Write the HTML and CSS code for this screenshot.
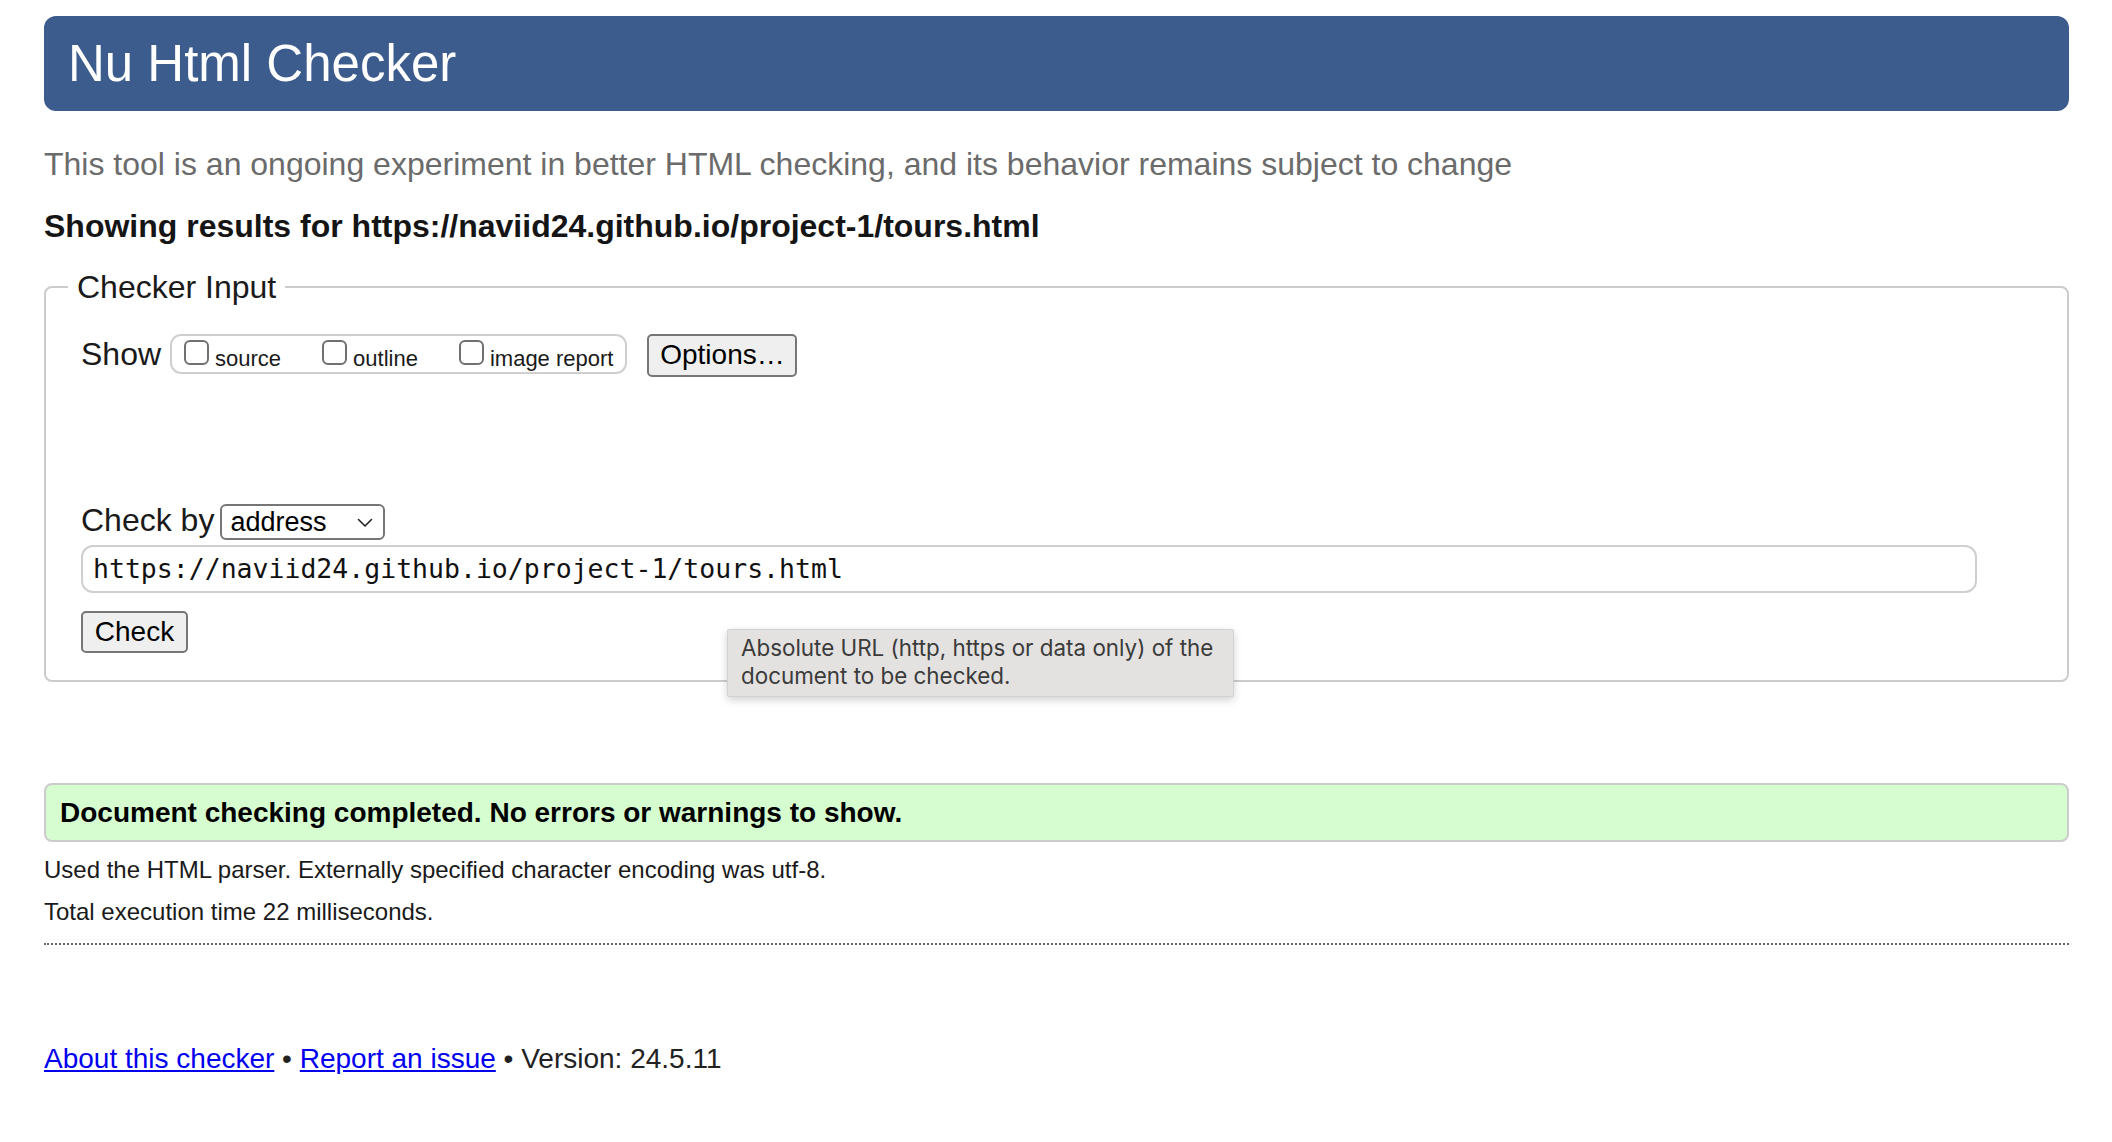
FILE: index.html
```
<!DOCTYPE html>
<html lang="en">
<head>
<meta charset="utf-8">
<title>Showing results for https://naviid24.github.io/project-1/tours.html - Nu Html Checker</title>
<link rel="stylesheet" href="styles.css">
</head>
<body>
<h1 class="title">Nu Html Checker</h1>
<p class="intro">This tool is an ongoing experiment in better HTML checking, and its behavior remains subject to change</p>
<p class="showing">Showing results for https://naviid24.github.io/project-1/tours.html</p>
<form class="checker">
  <fieldset class="fs">
    <legend class="legend">Checker Input</legend>
    <div class="fs-body">
      <div class="row show-row">
        <span class="label">Show</span>
        <span class="group">
          <label class="opt"><input type="checkbox" class="cb"><span>source</span></label>
          <label class="opt"><input type="checkbox" class="cb"><span>outline</span></label>
          <label class="opt"><input type="checkbox" class="cb"><span>image report</span></label>
        </span>
        <button type="button" class="btn btn-options">Options…</button>
      </div>
      <div class="spacer"></div>
      <div class="row by-row">
        <span class="label">Check by</span>
        <span class="select">
          <span class="select-text">address</span>
          <svg class="chev" width="16" height="10" viewBox="0 0 16 10"><path d="M1.5 1.5 L8 8 L14.5 1.5" fill="none" stroke="#222" stroke-width="1.6" stroke-linecap="round" stroke-linejoin="round"/></svg>
        </span>
      </div>
      <div class="url">https://naviid24.github.io/project-1/tours.html</div>
      <div class="row check-row">
        <button type="button" class="btn btn-check">Check</button>
      </div>
    </div>
    <div class="tooltip">Absolute URL (http, https or data only) of the document to be checked.</div>
  </fieldset>
</form>
<div class="success">Document checking completed. No errors or warnings to show.</div>
<p class="details">Used the HTML parser. Externally specified character encoding was utf-8.</p>
<p class="details">Total execution time 22 milliseconds.</p>
<hr class="dots">
<p class="footer"><a href="#">About this checker</a> • <a href="#">Report an issue</a> • Version: 24.5.11</p>
</body>
</html>
```
FILE: styles.css
```
html, body {
  background: #ffffff;
}
body {
  margin: 0;
  padding: 16px 43px 0 44px;
  font-family: "Liberation Sans", Arial, Helvetica, sans-serif;
  color: #111;
}
.title {
  margin: 0;
  height: 95px;
  line-height: 95px;
  background: #3d5c8e;
  color: #ffffff;
  border-radius: 12px;
  font-size: 51px;
  font-weight: normal;
  padding-left: 24px;
}
.intro {
  margin: 35px 0 0;
  font-size: 32px;
  line-height: 36px;
  color: #6b6b6b;
}
.showing {
  margin: 26px 0 0;
  font-size: 32px;
  line-height: 36px;
  font-weight: bold;
  color: #151515;
}
.checker {
  margin: 25px 0 0;
}
.fs {
  position: relative;
  margin: 0;
  border: 2px solid #cccccc;
  border-radius: 8px;
  padding: 0 0 0 22px;
  min-width: 0;
}
.legend {
  font-size: 32px;
  line-height: 36px;
  padding: 0 9px;
  color: #1a1a1a;
}
.fs-body {
  padding: 27px 0 27px 13px;
}
.row {
  display: flex;
  align-items: center;
}
.label {
  font-size: 32px;
  line-height: 40px;
  color: #1a1a1a;
}
.show-row {
  height: 44px;
}
.group {
  display: inline-flex;
  align-items: flex-start;
  margin-left: 9px;
  height: 40px;
  box-sizing: border-box;
  border: 2px solid #cfcfcf;
  border-radius: 11px;
  padding: 2px 12px 0 12px;
  gap: 41px;
}
.opt {
  display: inline-flex;
  align-items: flex-start;
  font-size: 22px;
  color: #1a1a1a;
}
.opt span {
  margin-top: 8px;
  margin-left: 6px;
}
.cb {
  appearance: none;
  -webkit-appearance: none;
  margin: 2px 0 0;
  width: 25px;
  height: 25px;
  box-sizing: border-box;
  border: 2px solid #707070;
  border-radius: 6px;
  background: #fff;
}
.btn {
  font-family: "Liberation Sans", Arial, Helvetica, sans-serif;
  background: #efefef;
  border: 2px solid #767676;
  border-radius: 5px;
  color: #000;
  padding: 0;
  box-sizing: border-box;
}
.btn-options {
  margin-left: 20px;
  margin-top: 2px;
  width: 150px;
  height: 43px;
  font-size: 28px;
}
.spacer {
  height: 124px;
}
.by-row {
  height: 40px;
}
.select {
  display: inline-flex;
  align-items: center;
  justify-content: space-between;
  margin-left: 6px;
  margin-top: 3px;
  width: 165px;
  height: 36px;
  box-sizing: border-box;
  border: 2px solid #767676;
  border-radius: 6px;
  padding: 0 10px 0 8px;
  font-size: 27px;
  color: #000;
}
.select-text {
  line-height: 32px;
}
.chev {
  display: block;
  margin-top: 2px;
}
.url {
  margin-top: 5px;
  margin-right: 90px;
  height: 48px;
  box-sizing: border-box;
  border: 2px solid #cfcfcf;
  border-radius: 12px;
  padding: 0 10px;
  font-family: "DejaVu Sans Mono", Menlo, monospace;
  font-size: 26.5px;
  line-height: 44px;
  color: #111;
}
.check-row {
  margin-top: 18px;
}
.btn-check {
  width: 107px;
  height: 42px;
  font-size: 28px;
}
.tooltip {
  position: absolute;
  left: 681px;
  top: 324px;
  width: 507px;
  height: 68px;
  box-sizing: border-box;
  padding: 4px 12px 0 13px;
  background: #e3e2e0;
  border: 1px solid #d2d2d2;
  border-radius: 2px;
  box-shadow: 0 3px 8px rgba(0, 0, 0, 0.18);
  font-family: Inter, "Open Sans", sans-serif;
  font-size: 22.4px;
  line-height: 28px;
  color: #3b3b3b;
}
.success {
  margin-top: 101px;
  height: 59px;
  box-sizing: border-box;
  border: 2px solid #cccccc;
  border-radius: 8px;
  background: #d6fdd0;
  padding-left: 14px;
  font-size: 28px;
  line-height: 55px;
  font-weight: bold;
  color: #000;
}
.details {
  margin: 14px 0 0;
  font-size: 24px;
  line-height: 28px;
  color: #1a1a1a;
}
.dots {
  margin: 17px 0 0;
  border: 0;
  border-top: 2px dotted #666;
  height: 0;
}
.footer {
  margin: 97px 0 0;
  font-size: 28px;
  line-height: 34px;
  color: #222;
}
.footer a {
  color: #0000ee;
}
```
